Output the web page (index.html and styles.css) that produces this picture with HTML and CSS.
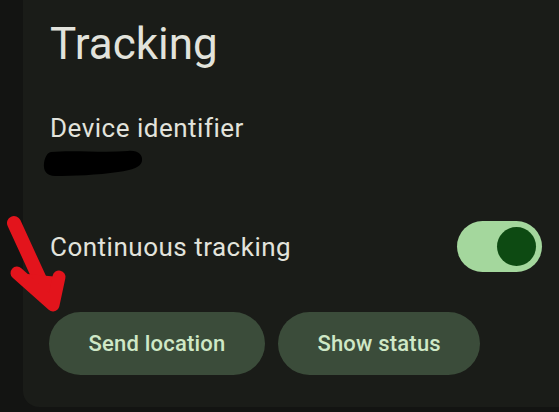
FILE: index.html
```html
<!DOCTYPE html>
<html lang="en">

<head>
    <meta charset="UTF-8">
    <meta name="viewport" content="width=device-width, initial-scale=1.0">
    <title>Tracking</title>
    <link rel="stylesheet" href="styles.css">
</head>

<body>
    <div class="card">
        <h2 class="title">Tracking</h2>

        <div class="label">Device identifier</div>
        <!-- identifier scribbled out in the screenshot -->
        <svg class="redacted" width="100" height="28" viewBox="0 0 100 28">
            <path d="M8 3 C30 1 60 4 85 2 C95 1 100 6 99 12 C98 18 90 21 75 23 C55 26 30 27 12 27 C4 27 0 22 1 14 C2 8 4 4 8 3 Z"
                fill="#000" />
        </svg>

        <div class="row">
            <span class="label">Continuous tracking</span>
            <div class="switch on">
                <div class="thumb"></div>
            </div>
        </div>

        <div class="actions">
            <button type="button" class="tonal">Send location</button>
            <button type="button" class="tonal">Show status</button>
        </div>
    </div>

    <!-- red annotation arrow drawn over the screenshot -->
    <svg class="arrow" width="70" height="100" viewBox="0 0 70 100">
        <path d="M14 8 L47 80" stroke="#e3141c" stroke-width="14" stroke-linecap="round" fill="none" />
        <path d="M17 58 L53 90 L59 62" stroke="#e3141c" stroke-width="13" stroke-linecap="round"
            stroke-linejoin="round" fill="#e3141c" />
    </svg>
</body>

</html>
```

FILE: styles.css
```css
body {
    margin: 0;
    background-color: #131412;
    font-family: Roboto, "Noto Sans", sans-serif;
    overflow: hidden;
    height: 412px;
    position: relative;
}

.card {
    margin-left: 23px;
    width: 492px;
    padding: 16px 27px 32px 27px;
    background-color: #1a1c18;
    border-bottom-left-radius: 16px;
    color: #e2e3dc;
}

.title {
    margin: 0;
    font-size: 44px;
    line-height: 56px;
    font-weight: 400;
}

.label {
    display: block;
    margin-top: 38px;
    font-size: 26px;
    line-height: 36px;
    letter-spacing: 0.5px;
}

.redacted {
    display: block;
    margin: 3px 0 0 -7px;
}

.row {
    display: flex;
    align-items: center;
    justify-content: space-between;
    margin-top: 44px;
    height: 51px;
}

.row .label {
    margin-top: 0;
}

.switch {
    width: 85px;
    height: 51px;
    border-radius: 26px;
    background-color: #a4d79d;
    display: flex;
    align-items: center;
    justify-content: flex-end;
    padding: 0 6px;
    box-sizing: border-box;
}

.thumb {
    width: 39px;
    height: 39px;
    border-radius: 50%;
    background-color: #0d4a12;
}

.actions {
    display: flex;
    gap: 13px;
    margin-top: 40px;
    margin-left: -1px;
}

.tonal {
    height: 63px;
    padding: 0 39.5px;
    border: none;
    border-radius: 32px;
    background-color: #3b4c3a;
    color: #cfe8c6;
    font-family: Roboto, "Noto Sans", sans-serif;
    font-size: 22px;
    font-weight: 500;
    letter-spacing: 0.2px;
}

.arrow {
    position: absolute;
    left: 0;
    top: 215px;
}
```
